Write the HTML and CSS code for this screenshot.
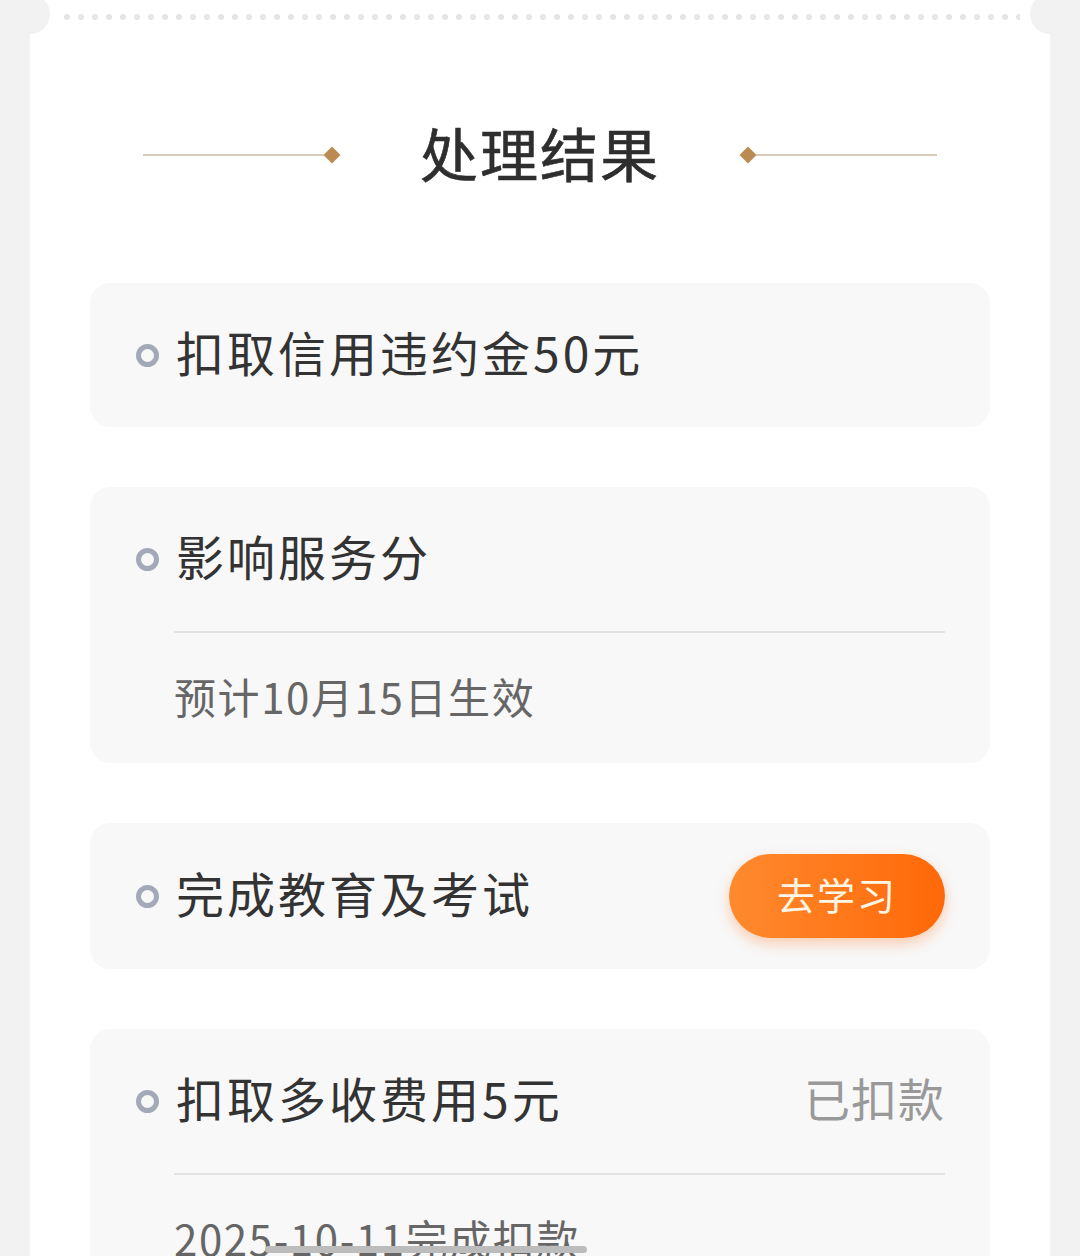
FILE: index.html
```html
<!DOCTYPE html>
<html>
	<head>
		<meta charset="UTF-8">
		<title>处理结果</title>
		<link rel="stylesheet" href="styles.css">
	</head>
	<body>
		<div class="sheet">
			<span class="notch notch-left"></span>
			<span class="notch notch-right"></span>
			<div class="dots"></div>

			<div class="heading">
				<div class="deco deco-left"><i class="line"></i><i class="diamond"></i></div>
				<h1>处理结果</h1>
				<div class="deco deco-right"><i class="diamond"></i><i class="line"></i></div>
			</div>

			<ul class="list">
				<li class="item">
					<div class="row">
						<span class="ring"></span>
						<span class="label">扣取信用违约金50元</span>
					</div>
				</li>
				<li class="item">
					<div class="row">
						<span class="ring"></span>
						<span class="label">影响服务分</span>
					</div>
					<div class="sub">预计10月15日生效</div>
				</li>
				<li class="item item-btn">
					<div class="row">
						<span class="ring"></span>
						<span class="label">完成教育及考试</span>
						<a class="btn" href="#">去学习</a>
					</div>
				</li>
				<li class="item">
					<div class="row">
						<span class="ring"></span>
						<span class="label">扣取多收费用5元</span>
						<span class="state">已扣款</span>
					</div>
					<div class="sub">2025-10-11完成扣款</div>
				</li>
			</ul>
		</div>
		<div class="scroll-bar"></div>
	</body>
</html>
```

FILE: styles.css
```css
* {
	margin: 0;
	padding: 0;
	border: none;
	box-sizing: border-box;
}
ul, li {
	list-style: none;
}
html, body {
	height: 1256px;
	overflow: hidden;
}
body {
	background: #f2f2f2;
	font-family: "Noto Sans CJK SC", "Noto Sans", sans-serif;
	color: #333;
}

.sheet {
	position: relative;
	margin: 0 30px;
	height: 1400px;
	background: #fff;
	padding-top: 14px;
}
.notch {
	position: absolute;
	top: -6px;
	width: 40px;
	height: 40px;
	border-radius: 50%;
	background: #f2f2f2;
}
.notch-left {
	left: -20px;
}
.notch-right {
	right: -20px;
}
.dots {
	height: 6px;
	margin: 0 30px;
	background-image: radial-gradient(circle, #e6e6e6 2.8px, transparent 3.2px);
	background-size: 14px 6px;
	background-position: 0 0;
}

.heading {
	display: flex;
	align-items: center;
	justify-content: center;
	margin-top: 105px;
	height: 60px;
}
.heading h1 {
	font-size: 58px;
	font-weight: 400;
	line-height: 60px;
	color: #2e2e2e;
	letter-spacing: 2px;
	margin: 0 80px 6px;
	-webkit-text-stroke: 0.6px #2e2e2e;
}
.deco {
	display: flex;
	align-items: center;
	width: 197px;
}
.deco .line {
	flex: 1;
	height: 2px;
	background: #d8ccb8;
}
.deco .diamond {
	width: 12px;
	height: 12px;
	background: #bb8b52;
	transform: rotate(45deg);
	margin: 0 2px;
}

.list {
	margin: 98px 60px 0;
}
.item {
	background: #f8f8f8;
	border-radius: 20px;
	padding: 0 45px 0 46px;
	margin-bottom: 60px;
}
.row {
	display: flex;
	align-items: center;
	height: 144px;
}
.item-btn .row {
	height: 146px;
}
.ring {
	width: 23px;
	height: 23px;
	border-radius: 50%;
	border: 5px solid #a3a9b7;
	margin-right: 17px;
	flex-shrink: 0;
}
.label {
	flex: 1;
	font-size: 48px;
	letter-spacing: 3px;
	color: #333;
	line-height: 1;
	margin-bottom: 8px;
}
.state {
	font-size: 46px;
	color: #999;
	letter-spacing: 1px;
	margin-bottom: 8px;
}
.sub {
	margin-left: 38px;
	border-top: 2px solid #e3e3e3;
	height: 132px;
	line-height: 126px;
	font-size: 42px;
	letter-spacing: 1.6px;
	color: #666;
}
.btn {
	display: block;
	width: 216px;
	height: 84px;
	line-height: 80px;
	border-radius: 42px;
	text-align: center;
	text-decoration: none;
	font-size: 38px;
	letter-spacing: 2px;
	color: #fff6e6;
	background: linear-gradient(90deg, #ff8a2e, #ff6808);
	box-shadow: 0 6px 14px rgba(255, 110, 20, 0.3);
}

.scroll-bar {
	position: fixed;
	left: 265px;
	top: 1246px;
	width: 322px;
	height: 7px;
	border-radius: 4px;
	background: #bcbcbc;
}
```
